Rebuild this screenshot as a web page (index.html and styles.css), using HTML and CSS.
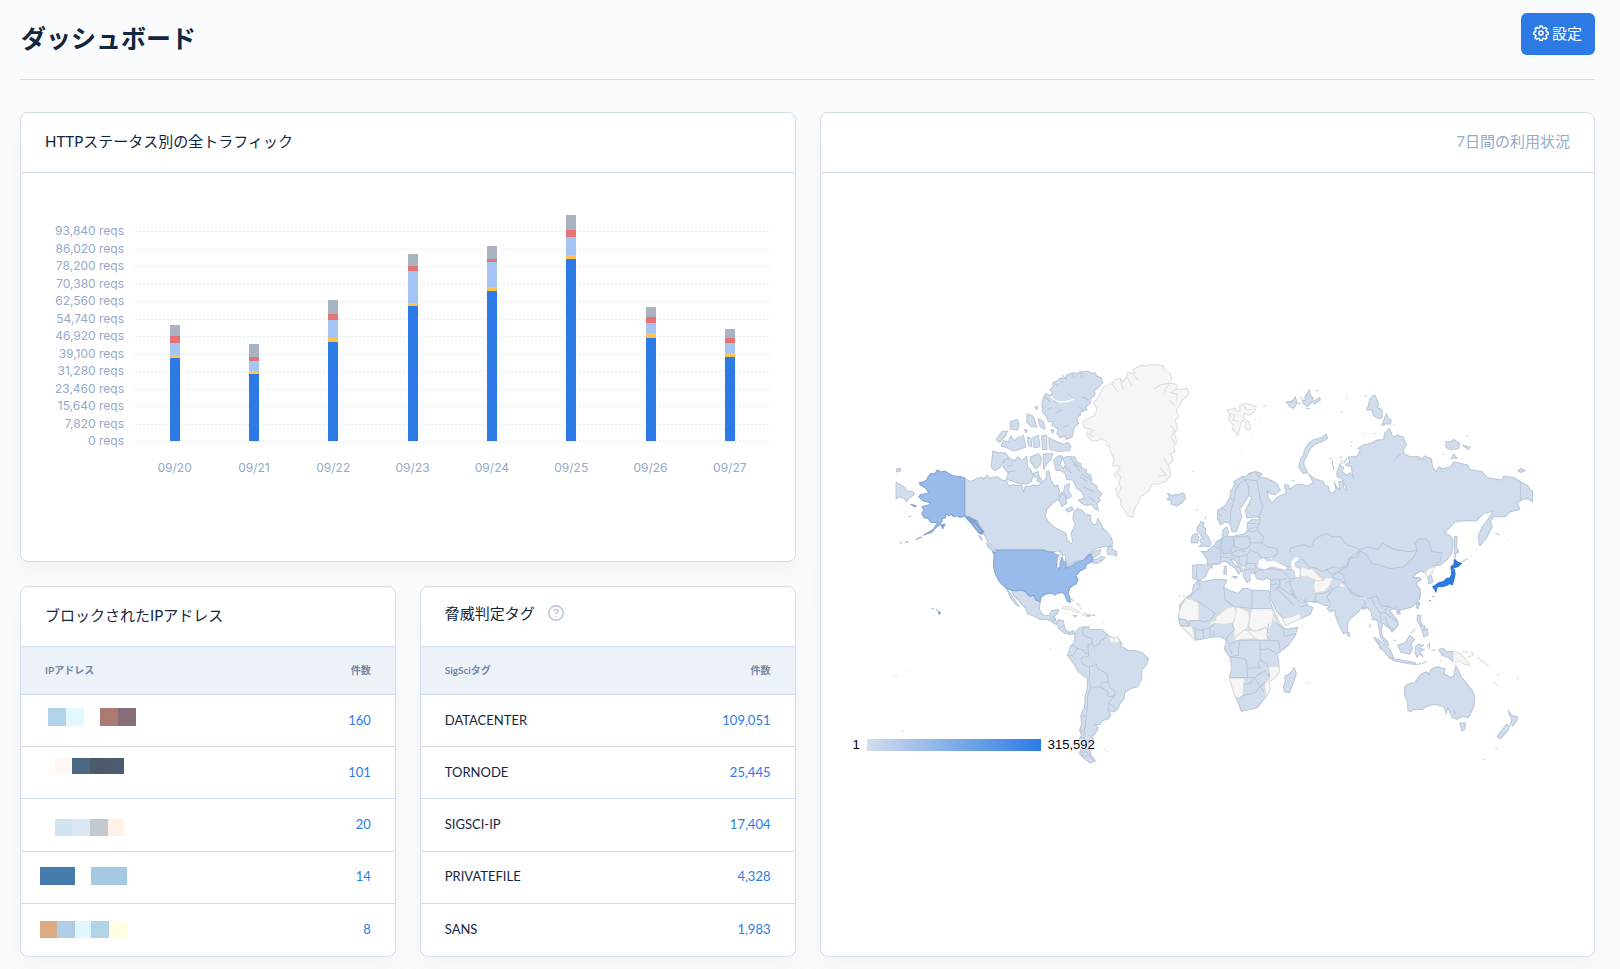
FILE: index.html
```html
<!DOCTYPE html>
<html lang="ja">
<head>
<meta charset="utf-8">
<title>ダッシュボード</title>
<meta name="viewport" content="width=device-width, initial-scale=1">
<link rel="stylesheet" href="styles.css">
</head>
<body>
<header class="page-header">
  <h1 class="page-title">ダッシュボード</h1>
  <button class="btn" type="button">
    <svg class="btn-icon" viewBox="0 0 16 16" aria-hidden="true"><path d="M6.9 1.1h2.2l.5 1.7 1.2.5 1.6-.9 1.5 1.5-.9 1.6.5 1.2 1.7.5v2.2l-1.7.5-.5 1.2.9 1.6-1.5 1.5-1.6-.9-1.2.5-.5 1.7H6.9l-.5-1.7-1.2-.5-1.6.9-1.5-1.5.9-1.6-.5-1.2-1.7-.5V7.2l1.7-.5.5-1.2-.9-1.6 1.5-1.5 1.6.9 1.2-.5z"/><circle cx="8" cy="8" r="2.1"/></svg>
    <span>設定</span>
  </button>
</header>
<main class="layout">
  <div class="left">
    <section class="card">
      <div class="card-header"><h2 class="card-title">HTTPステータス別の全トラフィック</h2></div>
      <div class="chart">
        <div class="y-axis">
          <span>93,840 reqs</span><span>86,020 reqs</span><span>78,200 reqs</span><span>70,380 reqs</span><span>62,560 reqs</span><span>54,740 reqs</span><span>46,920 reqs</span><span>39,100 reqs</span><span>31,280 reqs</span><span>23,460 reqs</span><span>15,640 reqs</span><span>7,820 reqs</span><span>0 reqs</span>
        </div>
        <div class="plot-lines"><i></i><i></i><i></i><i></i><i></i><i></i><i></i><i></i><i></i><i></i><i></i><i></i><i></i></div>
        <div class="bars">
          <div class="bar"><b class="s-err" style="height:11px"></b><b class="s-5" style="height:7px"></b><b class="s-4" style="height:12px"></b><b class="s-3" style="height:3px"></b><b class="s-2" style="height:83px"></b></div>
          <div class="bar"><b class="s-err" style="height:13px"></b><b class="s-5" style="height:4px"></b><b class="s-4" style="height:10px"></b><b class="s-3" style="height:3px"></b><b class="s-2" style="height:67px"></b></div>
          <div class="bar"><b class="s-err" style="height:14px"></b><b class="s-5" style="height:6px"></b><b class="s-4" style="height:18px"></b><b class="s-3" style="height:4px"></b><b class="s-2" style="height:99px"></b></div>
          <div class="bar"><b class="s-err" style="height:12px"></b><b class="s-5" style="height:5px"></b><b class="s-4" style="height:32px"></b><b class="s-3" style="height:3px"></b><b class="s-2" style="height:135px"></b></div>
          <div class="bar"><b class="s-err" style="height:13px"></b><b class="s-5" style="height:3px"></b><b class="s-4" style="height:25px"></b><b class="s-3" style="height:4px"></b><b class="s-2" style="height:150px"></b></div>
          <div class="bar"><b class="s-err" style="height:15px"></b><b class="s-5" style="height:7px"></b><b class="s-4" style="height:18px"></b><b class="s-3" style="height:4px"></b><b class="s-2" style="height:182px"></b></div>
          <div class="bar"><b class="s-err" style="height:10px"></b><b class="s-5" style="height:6px"></b><b class="s-4" style="height:10px"></b><b class="s-3" style="height:5px"></b><b class="s-2" style="height:103px"></b></div>
          <div class="bar"><b class="s-err" style="height:9px"></b><b class="s-5" style="height:5px"></b><b class="s-4" style="height:10px"></b><b class="s-3" style="height:4px"></b><b class="s-2" style="height:84px"></b></div>
        </div>
        <div class="x-axis"><span>09/20</span><span>09/21</span><span>09/22</span><span>09/23</span><span>09/24</span><span>09/25</span><span>09/26</span><span>09/27</span></div>
      </div>
    </section>
    <div class="pair">
      <section class="card">
        <div class="card-header"><h2 class="card-title">ブロックされたIPアドレス</h2></div>
        <table class="table">
          <thead><tr><th scope="col">IPアドレス</th><th scope="col" class="num">件数</th></tr></thead>
          <tbody>
            <tr><td class="masked"><svg viewBox="0 0 100 51"><path fill="#b1d3e9" d="M11 13h18v18H11z"/><path fill="#e3f7ff" d="M29 13h18v18H29z"/><path fill="#a97b74" d="M63 13h18v18H63z"/><path fill="#876d79" d="M81 13h18v18H81z"/></svg></td><td class="num"><a href="#">160</a></td></tr>
            <tr><td class="masked"><svg viewBox="0 0 100 51"><path fill="#fffefa" d="M0 11h18v16H0z"/><path fill="#fff8f2" d="M18 11h17v16H18z"/><path fill="#4b6784" d="M35 11h18v16H35z"/><path fill="#4c5a6c" d="M53 11h17v16H53z"/><path fill="#4c5b70" d="M70 11h17v16H70z"/></svg></td><td class="num"><a href="#">101</a></td></tr>
            <tr><td class="masked"><svg viewBox="0 0 100 51"><path fill="#d1e3ef" d="M18 20h17v17H18z"/><path fill="#dbe8f4" d="M35 20h18v17H35z"/><path fill="#c3c7d0" d="M53 20h18v17H53z"/><path fill="#fff1e6" d="M71 20h16v17H71z"/></svg></td><td class="num"><a href="#">20</a></td></tr>
            <tr><td class="masked"><svg viewBox="0 0 100 51"><path fill="#467bad" d="M3 15h35v18H3z"/><path fill="#a3cae1" d="M54 15h36v18H54z"/></svg></td><td class="num"><a href="#">14</a></td></tr>
            <tr><td class="masked"><svg viewBox="0 0 100 51"><path fill="#deaa82" d="M3 17h17v17H3z"/><path fill="#b0cde6" d="M20 17h18v17H20z"/><path fill="#e2f6ff" d="M38 17h16v17H38z"/><path fill="#b0d3e5" d="M54 17h18v17H54z"/><path fill="#ffffe0" d="M72 17h18v17H72z"/></svg></td><td class="num"><a href="#">8</a></td></tr>
          </tbody>
        </table>
      </section>
      <section class="card">
        <div class="card-header with-help">
          <h2 class="card-title">脅威判定タグ</h2>
          <button class="help" type="button" aria-label="ヘルプ"><svg viewBox="0 0 16 16"><circle cx="8" cy="8" r="7.2"/><path d="M6 6.3c0-1.2.9-1.9 2-1.9s2 .7 2 1.8c0 1.5-2 1.5-2 3"/><path d="M8 11.1v1"/></svg></button>
        </div>
        <table class="table">
          <thead><tr><th scope="col">SigSciタグ</th><th scope="col" class="num">件数</th></tr></thead>
          <tbody>
            <tr><td>DATACENTER</td><td class="num"><a href="#">109,051</a></td></tr>
            <tr><td>TORNODE</td><td class="num"><a href="#">25,445</a></td></tr>
            <tr><td>SIGSCI-IP</td><td class="num"><a href="#">17,404</a></td></tr>
            <tr><td>PRIVATEFILE</td><td class="num"><a href="#">4,328</a></td></tr>
            <tr><td>SANS</td><td class="num"><a href="#">1,983</a></td></tr>
          </tbody>
        </table>
      </section>
    </div>
  </div>
  <section class="card map-card">
    <div class="card-header"><span class="card-note">7日間の利用状況</span></div>
    <div class="map-body">
      <figure class="map">
        <svg viewBox="-105 42 2175 1200" role="img" aria-label="国別アクセス数">
          <!-- North America -->
          <g class="land">
            <path d="M254 384 270 394 282 390 290 384 296 386 305 380 310 387 322 375 328 386 335 382 350 380 365 390 380 393 386 408 400 403 410 407 425 404 430 426 436 408 445 410 460 405 475 408 483 398 470 392 477 380 490 395 500 382 498 365 506 362 512 390 525 410 532 404 538 422 535 440 545 425 552 440 545 452 530 450 515 462 500 478 495 500 505 515 520 530 540 540 558 550 562 570 572 582 578 575 572 550 580 535 585 525 578 505 582 485 592 475 605 480 615 492 632 496 632 515 642 525 650 520 652 505 662 520 668 533 680 545 692 560 697 575 695 588 670 590 655 592 640 600 625 618 645 603 662 598 658 612 636 625 625 613 610 630 590 632 575 640 557 655 560 640 552 622 540 605 525 606 508 606 490 600 350 600 340 590 325 578 318 565 310 550 295 530 280 512 266 500 254 498z"/>
            <path d="M638 628 650 628 662 618 675 622 665 632 650 640 640 640zM680 604 684 592 695 586 697 598 710 605 708 618 692 612 682 612zM296 556 304 562 306 572zM318 578 330 588 346 602 338 603 324 592z"/>
            <path d="M510 118 520 108 518 98 533 92 540 84 555 85 560 75 580 68 592 72 600 66 625 64 636 70 645 68 650 78 663 84 668 98 655 112 643 122 645 134 632 145 630 160 618 170 620 180 602 186 600 195 590 205 595 220 582 232 580 245 575 262 560 268 552 258 540 264 530 250 534 238 515 225 520 215 505 215 498 198 488 188 485 165 489 145 497 130 508 136 518 130z"/>
            <path d="M506 262 518 270 530 275 548 282 565 277 572 290 568 302 550 303 530 304 508 296zM484 258 500 255 500 298 488 298zM440 192 458 198 465 215 470 232 452 230 440 215zM474 206 490 215 495 238 480 230zM390 215 412 208 417 225 412 240 392 238zM348 268 365 245 382 243 375 260 358 277zM363 288 370 272 385 276 392 258 403 272 415 262 430 256 437 290 420 298 400 303 385 295zM442 260 453 266 455 290 444 285zM458 262 475 256 480 290 462 293zM464 170 472 170 470 180zM434 238 442 240 437 248zM512 238 522 240 518 250z"/>
            <path d="M338 303 355 308 375 308 386 322 368 335 360 352 345 362 333 350 336 325zM372 330 390 325 405 332 412 320 425 332 440 318 442 350 452 360 460 378 452 395 440 402 415 400 395 392 378 388 385 370 368 350zM452 320 475 311 485 325 480 345 466 356 458 344 450 335zM490 312 518 310 512 330 500 340 490 358zM460 370 474 364 478 385 466 382z"/>
            <path d="M520 330 535 317 548 318 540 345 550 355 556 345 548 325 560 319 585 321 590 335 602 340 603 352 618 358 620 370 632 375 635 398 650 408 652 420 665 430 655 445 662 452 650 458 655 482 643 475 634 462 620 466 605 460 595 450 612 444 605 425 590 415 578 390 560 388 555 370 540 360 528 362 525 350zM555 405 568 400 566 425 575 438 560 446 550 425zM535 445 552 430 560 458 545 470zM556 478 575 470 580 480 563 486z"/>
            <path d="M380 716 405 722 425 720 435 724 448 738 460 735 468 750 480 755 478 775 483 788 495 797 508 795 513 782 535 778 533 790 522 798 512 802 510 812 500 808 480 808 465 800 442 790 438 776 425 762 415 750 400 735 395 722zM380 718 390 728 398 742 408 755 417 770 408 764 395 748 388 735z"/>
            <path d="M48 396 60 403 75 413 80 422 98 424 103 432 92 442 86 445 80 455 72 445 56 440 48 447zM50 356 60 355 63 362 50 366zM862 430 872 434 878 438 885 432 895 435 905 428 912 432 917 445 905 458 890 467 872 462 875 452 860 448 868 442zM620 793 632 794 626 799 618 797zM580 796 590 797 584 800zM637 795 644 796z"/>
          </g>
          <g class="land none">
            <path d="M640 160 655 140 660 130 668 112 695 100 705 88 720 85 728 95 740 78 742 68 765 70 755 60 785 45 800 48 820 42 850 48 853 60 868 68 875 85 868 100 888 103 888 118 905 118 920 115 927 128 915 145 905 150 900 165 888 180 895 200 885 210 892 235 882 250 890 275 880 290 884 305 870 312 880 330 865 345 872 375 858 392 835 402 815 402 808 420 790 435 778 442 775 458 765 472 757 502 742 498 735 482 722 465 722 448 710 435 706 415 718 405 712 385 702 375 712 355 697 345 702 325 693 310 690 292 680 285 678 272 660 265 655 272 635 272 618 255 626 242 610 232 608 215 625 205 645 195 650 175z"/>
            <path d="M695 100 712 125M720 85 728 118M740 80 755 108M757 72 775 92M868 100 840 105 820 118M868 102 850 128M888 118 870 128 892 132 888 152M868 150 880 165M838 350 858 375 836 378M850 322 862 345M706 345 720 350 712 372 722 380 716 400 724 412 714 430M870 225 884 240 872 262 884 280M612 232 640 240 626 252 640 262"/>
            <path d="M545 775 552 769 570 770 585 778 600 787 590 788 572 779zM606 794 615 787 620 798zM936 364l6 -2M949 480l3 2"/>
          </g>
          <g class="land us">
            <path d="M348 600 490 600 508 606 525 606 538 606 532 622 530 650 536 656 540 640 545 622 556 624 558 655 572 648 590 636 612 630 625 613 634 616 638 634 620 642 615 655 600 662 592 672 586 675 594 688 588 700 570 712 564 728 570 745 570 757 560 752 555 735 548 727 530 730 525 735 515 729 495 732 483 742 480 755 468 750 460 735 448 738 435 724 425 720 405 722 380 716 365 702 355 690 345 670 340 650 342 615 338 604 348 608z"/>
            <path d="M163 372 172 359 182 366 195 363 210 372 222 378 240 379 254 384 254 498 240 502 230 497 220 500 215 492 208 497 198 492 196 504 188 505 185 515 178 525 165 535 155 547 140 552 130 555 145 546 160 538 168 525 174 516 160 518 150 515 145 505 132 503 125 490 132 480 125 470 146 465 150 458 128 452 116 440 122 433 140 430 146 426 135 413 120 404 118 398 130 395 140 390 142 383 152 370z"/>
            <path class="deep" d="M254 498 266 500 280 507 292 512 298 530 312 545 305 553 295 548 285 535 275 522 262 508zM182 525 195 522 188 536zM108 569 116 563 126 561M75 577 85 575M60 579 65 577M92 463 108 466 106 471zM86 498l6 2M155 774l5 2M168 779l5 3M175 784 182 788 177 793z"/>
          </g>
          <path class="water" d="M520 608 533 602 545 610 536 614zM532 622 540 618 538 650 531 655zM546 614 556 616 556 636 549 628z"/>
          <path class="channel" d="M512 138Q530 168 580 148"/>
          <path class="border" d="M522 150 530 162M545 75 560 88M575 70 582 85M520 100 535 108M525 190 545 180M548 232 565 225M560 130 575 140M500 180 515 172M600 66 606 82M625 150 605 140M540 84 548 98M610 182 598 172M495 140 510 156M380 350 400 345M385 365 410 362M555 350 575 370M580 340 600 365M600 380 622 395M610 410 640 425M625 440 645 455M570 325 590 345 606 352M606 372 636 392M280 520 300 545M290 512 306 535M570 745l12 7M590 758l8 10M600 772l6 6"/>
          <!-- South America -->
          <g transform="translate(-120 720)">
            <path class="land" d="M632 90 642 80 648 95 655 89 670 92 673 112 680 122 690 126 700 121 705 130 690 133 675 130 655 115 652 104 640 100zM703 130 718 112 732 110 740 112 745 108 748 118 770 118 785 118 800 132 810 140 835 145 845 160 840 170 850 172 865 182 880 180 905 187 925 205 920 222 905 238 905 265 892 290 870 296 853 308 852 325 840 340 832 358 822 365 803 360 812 372 806 385 785 392 780 403 765 403 775 412 765 430 755 438 762 455 752 462 748 480 753 495 766 512 750 518 735 508 718 490 725 470 716 450 724 435 718 420 724 405 722 375 733 352 735 320 741 295 742 265 715 245 700 220 682 195 688 180 690 168 702 158 704 145z"/>
            <path class="land none" d="M808 142 832 141 838 152 828 160 810 156zM820 143v14M790 480l6-2M798 484l7-3M162 259l9-2M207 242h4"/>
            <path class="border" d="M732 110 727 122 730 135 740 140 755 145 756 160 743 165 745 190M756 160 762 168 780 160 778 152 790 148 800 132M692 168 700 165 712 175 698 195 688 196M712 175 725 178 738 190 745 190 745 198 725 203 722 210 728 222 745 230 748 230 748 262M748 230 768 222 772 235 800 250 805 275 785 275 780 290 765 290 752 292 745 265M805 275 808 292 822 300 825 312 815 320 800 316 806 308 782 290M825 315 805 338 828 355M805 338 803 360M752 292 742 320 742 350 738 372 735 410 730 440 738 455 736 482M718 485 740 485 760 512M725 495 748 498M722 380 734 375M720 420 730 425M722 440 734 445M630 175h3M186 423h4M755 75h8M787 95h3M698 76h10"/>
            <path class="border" d="M632 92 640 95 648 82M645 100 655 98M660 110 670 110M684 124 685 130"/>
          </g>
          <!-- Europe and Asia -->
          <g transform="translate(900 0)">
            <path class="land" d="M37 645 60 643 80 645 82 630 70 610 62 604 80 605 88 597 100 590 108 575 125 565 128 540 138 530 145 545 140 558 150 562 165 557 190 552 203 540 200 520 215 508 232 510 240 503 225 500 200 504 195 480 208 458 215 442 205 437 188 465 178 475 185 500 175 525 168 545 155 545 148 520 135 515 120 524 112 505 112 482 135 465 150 440 150 425 165 402 160 395 185 380 200 378 205 370 225 364 245 370 238 380 262 385 290 400 300 420 285 434 268 430 260 422 265 445 275 458 288 445 300 436 318 430 312 405 325 405 328 418 345 405 365 402 378 408 400 398 385 372 402 385 430 395 432 405 445 410 447 425 458 430 467 418 462 395 468 410 480 420 475 395 488 392 490 415 500 420 484 385 470 380 470 365 478 345 490 352 485 365 500 375 510 368 520 387 512 350 495 345 508 335 504 320 530 320 540 300 533 295 550 285 575 278 590 270 610 268 612 250 628 236 635 255 645 262 650 255 668 260 678 285 668 300 672 312 690 320 715 320 725 328 732 318 752 325 757 350 767 366 775 350 785 356 810 350 820 335 862 345 868 358 905 365 920 382 965 390 970 378 1000 382 1020 395 1040 405 1050 420 1056 422 1056 455 1040 445 1028 448 1010 458 1018 478 990 485 975 500 940 500 930 515 935 530 920 560 898 588 893 560 905 530 925 505 938 480 920 490 915 485 895 505 888 513 865 511 825 514 805 535 792 550 808 555 818 570 815 608 800 628 780 645 765 645 745 655 733 668 720 663 705 672 697 683 718 683 722 688 707 700 720 720 718 745 705 762 690 772 655 780 640 775 628 782 650 808 654 825 635 845 628 835 618 828 608 818 602 845 608 860 622 875 625 888 615 880 600 862 596 835 592 810 576 808 572 785 560 772 548 778 545 768 535 785 510 805 502 820 500 845 490 852 478 828 468 805 462 780 450 785 440 775 450 768 430 765 410 755 375 755 345 740 330 722 340 738 350 748 370 758 375 748 384 768 398 772 390 792 360 805 315 825 308 805 290 785 275 755 268 740 270 715 272 690 258 683 250 690 228 685 225 670 208 668 210 690 200 697 190 680 188 665 172 645 165 630 150 628 165 645 185 660 175 672 165 655 145 640 132 632 115 642 100 642 85 658 75 680 55 692 38 685z"/>
            <path class="land" d="M55 590 65 582 58 572 68 562 52 545 50 535 62 515 72 518 68 530 76 535 75 550 84 560 92 578 88 590 70 588zM32 578 36 555 50 550 55 562 52 578zM355 350 362 325 370 315 372 300 385 280 400 268 425 262 438 252 442 265 425 275 405 282 388 298 380 318 370 335 372 348 382 368 368 370zM558 180 565 165 567 148 583 134 590 150 595 165 590 172 605 178 605 205 592 205 578 195 575 180zM603 227 618 192 624 205 633 212 630 222 615 222zM796 275 810 276 820 268 838 280 835 295 810 299 797 292zM846 285 870 292 862 298zM813 325 820 312 830 325zM1012 362 1022 355 1034 362 1020 367zM318 155 335 155 345 140 350 158 340 175 328 170zM366 150 375 152 380 132 388 118 390 135 400 145 392 160 382 170 368 160zM398 155 418 142 420 150 402 162zM822 560 830 558 828 590 836 606 828 606 824 625 822 600zM742 680 752 675 758 695 745 702zM708 772 715 757 718 762 712 775zM648 785 658 782 655 793zM500 842 508 850 508 858 500 856zM132 648h6v24h-7zM155 678 172 680 165 685z"/>
            <path class="land" d="M497 145h5M483 186h5M552 137h8M546 250h4M580 250h5M510 275h5M510 288h4M858 258h4M788 312h4M335 392h8M982 570h3M945 548 958 555M448 325h6M478 322h6M845 635 862 625M870 618h4M888 598h3M75 500v8M48 480h3M570 825v6M640 223h4M406 122h8M352 158l8 4M376 174l12 2M358 144h8"/>
            <path class="land china" d="M540 602 560 615 575 640 600 645 630 655 670 650 700 620 710 600 705 580 715 567 735 566 745 575 755 605 785 608 780 632 765 645 745 655 733 668 720 663 705 672 697 683 718 683 722 688 707 700 720 720 718 745 705 762 690 772 655 780 640 775 620 768 605 770 597 760 590 738 560 745 540 738 515 725 500 710 492 690 490 675 472 665 500 650 510 625 530 620z"/>
            <path class="land germany" d="M128 562 145 558 158 560 162 585 150 595 155 610 130 612 120 590z"/>
            <path class="land france" d="M62 604 80 605 88 597 100 588 118 595 122 620 120 640 100 642 82 642 82 630 70 610z"/>
            <path class="border" d="M328 605 330 595 345 590 370 584 385 590 398 588 400 572 415 560 440 550 455 560 480 560 500 585 520 590 540 600 560 590 595 598 605 578 640 598 690 605 710 600M542 602 525 612 505 625 500 645 478 655 460 650 440 658 425 665 410 655 385 650 370 630 360 625M440 658 450 672 475 665M385 655 410 670 430 690 455 682 472 665M455 682 480 690 492 700M450 705 455 720 440 740 450 760M455 720 480 705M500 712 520 735 560 745M548 740 555 760 545 775 562 770M575 745 580 760 590 775 600 790 610 785 625 770M600 790 602 820M610 785 630 800 650 815M615 800 622 825 640 840M400 690 408 728 402 752 415 755M408 728 430 730 450 720M345 685 330 685 328 700 345 735M270 690 300 688 320 685M300 688 295 710 280 720M295 710 335 735M360 770 380 765M310 805 360 795M312 668 328 685"/>
            <path class="border" d="M150 520 152 480 162 450 165 420 180 398 200 388 230 392 240 380M205 437 205 410 195 390M230 392 235 420 240 450 248 470 235 498 240 510 230 540 215 545 200 540M230 540 240 550 250 560 245 578 210 578 205 560 195 555M245 578 260 590 290 595 292 610 275 625 235 620M160 562 162 590 190 598 208 590 210 560M150 615 175 620 200 615 210 600 235 610 240 620M155 610 170 600 195 605M120 620 145 622 165 625M175 620 178 640 190 650 200 640 200 615M195 640 225 640 228 655 195 658M190 650 195 665M225 660 222 670 235 660 270 655 300 660 320 658 335 660M300 640 315 650 330 650M82 645 100 655M50 650 48 685M160 560 200 560M205 520 230 520M205 535 230 532M118 590 110 580M125 565 118 580"/>
            <path class="land none" d="M358 655 370 652 385 658 395 655 410 672 428 688 415 693 400 688 380 678 362 680zM403 692 430 690 440 682 458 684 450 705 430 725 405 728 400 710zM733 668 745 655 765 648 755 668 742 680zM540 742h20l-5 5zM475 705 485 698 495 710 488 712zM308 805 330 800 358 790 360 805 315 825zM140 180 165 175 172 185 180 180 178 168 195 158 228 170 222 185 205 195 192 190 190 205 205 215 212 232 206 242 195 235 198 220 185 210 180 228 172 258 165 245 155 235 160 225 145 210 148 195zM150 190 165 196 158 210 172 214M190 165 200 180 215 178M184 648h10v8h-10zM222 208h4M234 205h4M248 168l10-2M214 262h4M184 304h3M40 364h3"/>
            <path class="water" d="M230 648 235 630 250 622 258 632 270 632 282 630 300 640 322 652 315 660 295 655 275 650 255 658 238 656zM265 625 280 620 275 630zM332 632 345 620 358 622 355 632 343 638 345 650 358 655 360 668 358 684 345 680 342 665 330 648z"/>
            <path class="border" d="M115 490 125 500M125 475 140 482M150 440 158 450M160 400 175 408M185 382 195 390M205 370 215 378M228 366 235 380M455 330 460 360M485 330 480 345M660 310 640 332M500 325 490 340M1020 395V450M380 130 372 145M338 150 325 160"/>
            <path class="land japan" d="M822 628 832 636 843 640 832 650 822 652 812 658 812 648 820 645zM814 660 822 658 824 672 820 690 816 704 808 700 798 706 785 710 772 708 768 718 767 726 762 716 757 710 775 698 790 694 800 684 808 684 814 672zM757 739h3M747 751h4"/>
          </g>
          <!-- Africa and Oceania -->
          <g transform="translate(840 690)">
            <path class="land" d="M115 0 130 5 160 -2 190 -2 200 0 190 20 205 30 235 40 245 25 260 24 275 30 300 30 325 32 332 45 325 52 335 80 348 108 355 125 370 142 375 147 412 142 405 165 385 195 350 222 355 240 357 275 345 292 327 305 329 328 317 350 290 383 270 388 243 393 237 375 224 345 207 293 215 260 208 230 192 207 195 195 200 180 180 170 165 170 150 172 120 178 105 180 90 165 75 150 60 135 55 118 58 95 58 75 75 55 95 40 100 15z"/>
            <path class="land none" d="M75 55 100 58 100 62 115 68 117 120 85 122 58 116 56 95zM165 112 200 84 222 79 228 92 222 120 215 130 185 132 165 130 150 135 150 125 168 120zM228 78 265 95 268 122 262 142 245 155 222 172 220 150 218 130 226 105zM274 85 333 86 345 105 338 115 335 132 325 150 312 142 300 152 275 150 262 135 268 118zM262 150 285 153 315 140 328 165 318 178 295 180 280 172zM222 175 250 150 262 152 285 175 245 178 225 184zM338 100 350 122 372 142 360 135 340 122zM62 138 96 140 105 180 90 165 75 150zM207 292 225 294 255 294 250 312 248 352 235 355 222 345zM320 260 357 258 357 275 345 292 327 305 329 328 317 350 312 310 330 295 322 275zM368 115 390 112 418 100 422 115 375 135zM288 360l6-4 4 4-5 5zM297 210h6v8h-5z"/>
            <path class="land" d="M402 262 408 280 400 305 388 337 372 335 369 318 375 305 373 288 390 280zM640 172 655 178 690 210 700 232 688 235 670 212 655 195zM692 235 715 238 735 242 765 248 765 253 740 250 700 242zM712 195 735 187 748 166 763 178 752 192 757 205 748 222 722 217zM765 200 775 192 790 195 775 203 792 208 780 214 788 230 776 220 770 232 764 218zM835 208 848 204 858 215 878 213 878 245 865 232 845 225zM771 105 781 105 780 122 786 135 778 132 770 122zM785 150 800 145 803 165 790 170zM778 135 795 138 792 150 782 145zM768 72 777 66 773 85zM733 320 742 312 765 305 778 285 795 275 805 282 812 268 822 262 835 260 855 266 850 280 870 292 880 287 886 256 895 272 902 290 915 305 935 330 943 350 940 380 925 412 905 409 890 417 876 412 862 383 858 400 850 380 825 372 800 378 785 388 760 388 750 395 742 390 742 368 733 345zM898 428 916 428 912 448 904 452zM1042 390 1055 405 1073 410 1068 422 1057 437 1050 430 1054 418zM1010 468 1038 432 1048 437 1042 452 1020 476z"/>
            <path class="land none" d="M878 213 900 220 918 240 930 255 912 252 895 242 878 247zM905 213 925 218M920 232 938 226 940 220 932 214M948 232 965 240 985 260M1010 280 1016 286M998 306 1014 318M1068 300 1076 290M433 312h4M424 136h3"/>
            <path class="border" d="M115 5 120 20 85 55M112 62 165 100 150 120M190 22 195 60 222 79M275 30V85H333M222 79 275 85M150 120 130 125 118 120 90 122 85 138M96 140 105 145 120 150 145 145 165 130M128 145 130 175M150 145 150 172M105 145V178M160 150 160 168M215 130 222 150 205 165 195 180M58 116 78 120 85 138 60 135M195 180 210 192 230 182 240 180 235 200 235 225 210 230M205 195 215 220M240 180 300 180 325 182 355 182 360 215M325 130 320 165 328 180M345 125 370 145 372 170 405 160M298 210 325 205 350 222M298 180 300 210 300 240 292 250 300 262 260 265 258 240 240 232 210 230M260 265 262 292 207 292M300 240 320 250 322 262M262 292 282 292 300 280 318 270M282 292 270 310 250 312M282 292 300 318 318 305M300 318 285 338 250 345 235 355M300 318 312 335M325 262 328 290 322 280M355 -5 360 10 350 25 400 75M330 15 350 10M375 10 400 0M455 65 470 68"/>
            <path class="border" d="M650 182l8 10M655 200l8 8M768 252l10 2M785 250l14-6M800 200 808 190 806 208M812 210h14M775 248l8 4M700 180h8M752 160 765 145M840 240l4 2M628 130v10M705 80h6M715 100h8M55 48h5M68 48h6M442 308h4M1005 505h5M968 538h4M798 275 810 285M880 390 885 402"/>
          </g>
        </svg>
        <figcaption class="legend"><span>1</span><i class="legend-bar"></i><span>315,592</span></figcaption>
      </figure>
    </div>
  </section>
</main>
</body>
</html>
```

FILE: styles.css
```css
* { box-sizing: border-box; }

body {
  margin: 0;
  padding: 0 25px 12px 20px;
  background: #f9fbfd;
  color: #12263f;
  font-family: Lato, "Noto Sans CJK JP", sans-serif;
  font-size: 15px;
  line-height: 24px;
}

.page-header {
  display: flex;
  align-items: flex-start;
  justify-content: space-between;
  height: 80px;
  padding-top: 13px;
  border-bottom: 1px solid #d2ddec;
}

.page-title {
  margin: 7px 0 0 1px;
  font-size: 25px;
  font-weight: 700;
  line-height: 36px;
}

.btn {
  display: flex;
  align-items: center;
  gap: 3px;
  height: 42px;
  padding: 0 13px 2px 12px;
  border: 0;
  border-radius: 6px;
  background: #2c7be5;
  color: #fff;
  font: inherit;
}

.btn-icon {
  width: 16px;
  height: 16px;
  fill: none;
  stroke: #fff;
  stroke-width: 1.5;
  stroke-linejoin: round;
}

.layout {
  display: grid;
  grid-template-columns: minmax(0, 1fr) minmax(0, 1fr);
  gap: 24px;
  padding-top: 32px;
}

.left {
  display: flex;
  flex-direction: column;
  gap: 24px;
}

.pair {
  display: grid;
  grid-template-columns: 1fr 1fr;
  gap: 24px;
}

.card {
  border: 1px solid #d2ddec;
  border-radius: 8px;
  background: #fff;
  box-shadow: 0 12px 24px rgba(18, 38, 63, 0.03);
  overflow: hidden;
}

.card-header {
  display: flex;
  align-items: center;
  gap: 13px;
  height: 60px;
  padding: 0 24px 3px;
  border-bottom: 1px solid #d2ddec;
}

.with-help { padding-bottom: 8px; }

.card-title {
  margin: 0;
  font-size: 15px;
  font-weight: 400;
}

.card-note {
  margin-left: auto;
  color: #95aac9;
}

.help {
  display: flex;
  padding: 0;
  border: 0;
  background: none;
}

.help svg {
  width: 16px;
  height: 16px;
  fill: none;
  stroke: #b1c2db;
  stroke-width: 1.4;
}

.chart {
  display: grid;
  grid-template-columns: auto 1fr;
  grid-template-rows: 226px auto;
  column-gap: 11px;
  padding: 50px 25px 85px 32px;
  color: #95aac9;
  font-family: Inter, sans-serif;
  font-size: 12px;
  line-height: 16px;
}

.y-axis {
  display: flex;
  flex-direction: column;
  justify-content: space-between;
  width: 71px;
  text-align: right;
  white-space: nowrap;
}

.plot-lines {
  grid-area: 1 / 2;
  display: flex;
  flex-direction: column;
  justify-content: space-between;
  padding: 8px 0 7px;
}

.plot-lines i {
  height: 1px;
  background: repeating-linear-gradient(90deg, #e3ebf6 0 2px, transparent 2px 4px);
}

.bars {
  grid-area: 1 / 2;
  display: grid;
  grid-template-columns: repeat(8, 1fr);
  grid-template-rows: minmax(0, 1fr);
  align-items: end;
  justify-items: center;
  padding-bottom: 8px;
}

.bar { width: 10px; }
.bar b { display: block; }
.s-2 { background: #2c7be5; }
.s-3 { background: #fdc453; }
.s-4 { background: #a6c5f7; }
.s-5 { background: #e57373; }
.s-err { background: #a9b3c2; }

.x-axis {
  grid-area: 2 / 2;
  display: grid;
  grid-template-columns: repeat(8, 1fr);
  padding-top: 11px;
  text-align: center;
}

.table {
  width: 100%;
  height: 309px;
  border-collapse: separate;
  border-spacing: 0;
  font-size: 13px;
  line-height: 20px;
}

.table th {
  height: 48px;
  padding: 0 24px 2px;
  border-bottom: 1px solid #d2ddec;
  background: #edf2f9;
  color: #7587a3;
  font-size: 10px;
  font-weight: 700;
  text-align: left;
}

.table td {
  height: 52px;
  padding: 0 24px 2px;
  border-bottom: 1px solid #d2ddec;
}

.table tr:last-child td { border-bottom: 0; }
.table .num { text-align: right; }
.table a { color: #2c7be5; text-decoration: none; }
.table .masked { padding: 0 16px; }

.masked svg {
  display: block;
  width: 100px;
  height: 51px;
}

.map-card {
  display: flex;
  flex-direction: column;
}

.map-body {
  flex: 1;
  display: flex;
  align-items: center;
  padding: 0 24px;
}

.map {
  position: relative;
  width: 100%;
  margin: 0;
}

.map svg {
  display: block;
  width: 100%;
  height: auto;
}

.land {
  fill: #d1ddec;
  stroke: #b9c6d7;
  stroke-width: 3;
  stroke-linejoin: round;
}

.border {
  fill: none;
  stroke: #b9c6d7;
  stroke-width: 3;
}

.channel {
  fill: none;
  stroke: #fff;
  stroke-width: 4;
}

.none { fill: #f6f6f6; stroke: #dddddd; }
.us { fill: #99bbea; stroke: #82a3d3; }
.deep { fill: #82a3d3; }
.china { fill: #ccd9ec; }
.germany { fill: #c7d7ef; }
.france { fill: #ced9ed; }
.japan { fill: #2c7be5; stroke: #2a70d0; }
.water { fill: #fff; stroke: #b9c6d7; stroke-width: 2; }

.legend {
  position: absolute;
  left: 8px;
  bottom: 13px;
  display: flex;
  align-items: center;
  gap: 7px;
  color: #000;
  font-family: "Liberation Sans", Arial, sans-serif;
  font-size: 13px;
  line-height: 14px;
  text-shadow: 0 0 1px #fff, 1px 0 1px #fff, -1px 0 1px #fff;
}

.legend-bar {
  width: 174px;
  height: 12px;
  background: linear-gradient(90deg, #d2ddec, #2c7be5);
}
```
